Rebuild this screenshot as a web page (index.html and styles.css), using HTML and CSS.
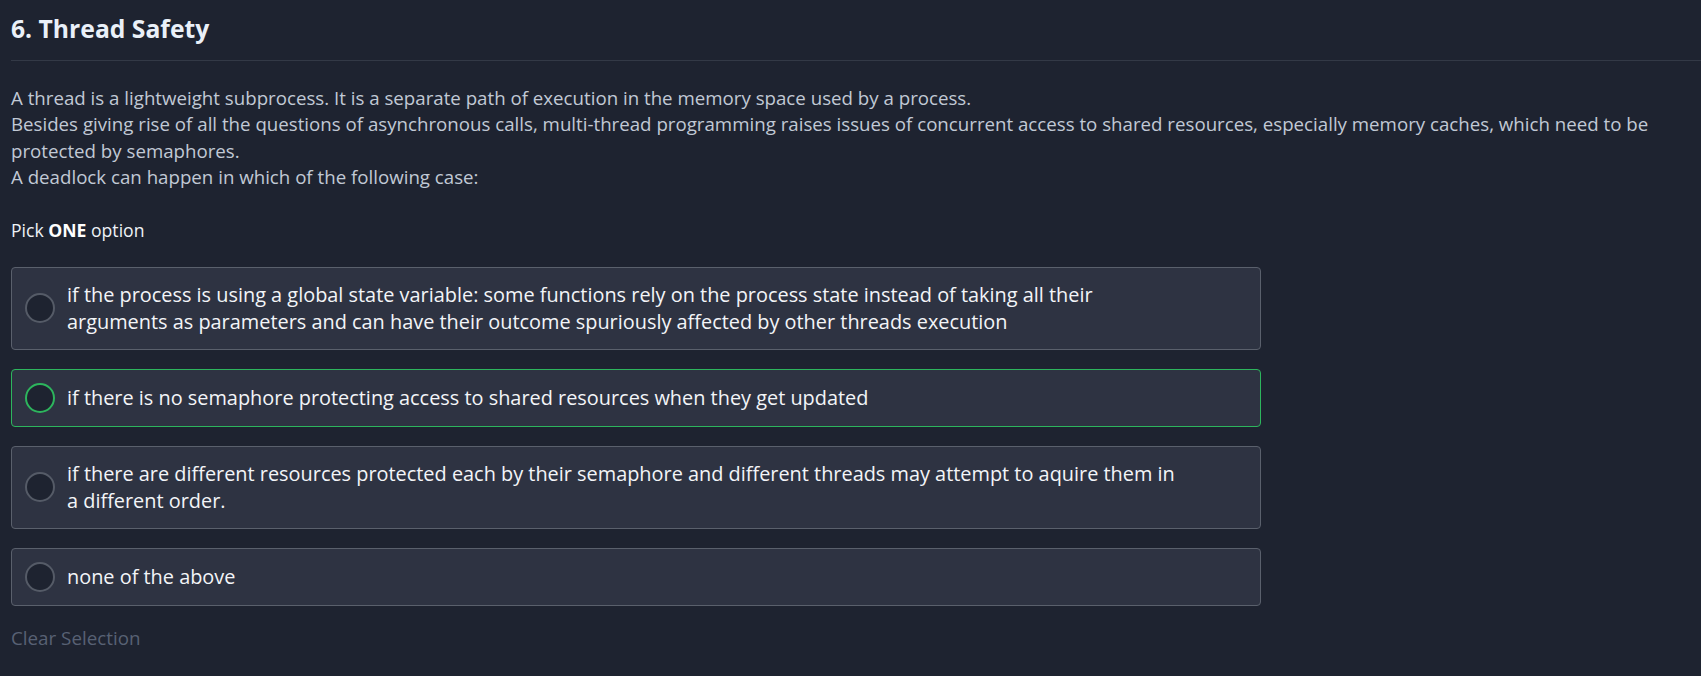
FILE: index.html
```html
<!DOCTYPE html>
<html lang="en">
<head>
<meta charset="utf-8">
<title>6. Thread Safety</title>
<link rel="stylesheet" href="styles.css">
</head>
<body>
<main class="page">
  <h1 class="title">6. Thread Safety</h1>
  <div class="prompt">
    <p>A thread is a lightweight subprocess. It is a separate path of execution in the memory space used by a process.<br>
    Besides giving rise of all the questions of asynchronous calls, multi-thread programming raises issues of concurrent access to shared resources, especially memory caches, which need to be protected by semaphores.<br>
    A deadlock can happen in which of the following case:</p>
  </div>
  <p class="pick">Pick <strong>ONE</strong> option</p>
  <ul class="options">
    <li class="option">
      <span class="radio"></span>
      <span class="opt-text">if the process is using a global state variable: some functions rely on the process state instead of taking all their arguments as parameters and can have their outcome spuriously affected by other threads execution</span>
    </li>
    <li class="option option-focus">
      <span class="radio"></span>
      <span class="opt-text">if there is no semaphore protecting access to shared resources when they get updated</span>
    </li>
    <li class="option">
      <span class="radio"></span>
      <span class="opt-text">if there are different resources protected each by their semaphore and different threads may attempt to aquire them in a different order.</span>
    </li>
    <li class="option">
      <span class="radio"></span>
      <span class="opt-text">none of the above</span>
    </li>
  </ul>
  <div class="clear">Clear Selection</div>
</main>
</body>
</html>
```
FILE: styles.css
```css
html, body {
  margin: 0;
  padding: 0;
  background: #1e2330;
}
body {
  font-family: "Open Sans", "Noto Sans", sans-serif;
  color: #c3cad6;
}
.page {
  padding: 0 0 0 11px;
}
.title {
  margin: 0;
  padding: 13px 0 15px 0;
  font-size: 24.7px;
  line-height: 32px;
  font-weight: 700;
  color: #eaf0f8;
  border-bottom: 1px solid #333946;
}
.prompt {
  margin-top: 24px;
}
.prompt p {
  margin: 0;
  font-size: 18.7px;
  line-height: 26.4px;
  color: #c1c9d5;
}
.pick {
  margin: 26px 0 0 0;
  font-size: 17.6px;
  line-height: 26px;
  color: #eef2f7;
}
.pick strong {
  font-weight: 700;
  color: #ffffff;
}
.options {
  list-style: none;
  margin: 24px 0 0 0;
  padding: 0;
  width: 1250px;
  display: flex;
  flex-direction: column;
  gap: 19px;
}
.option {
  display: flex;
  align-items: center;
  gap: 12px;
  padding: 13px;
  background: #2e3342;
  border: 1px solid #5a606c;
  border-radius: 4px;
}
.option-focus {
  border-color: #2db55d;
}
.radio {
  flex: none;
  width: 26px;
  height: 26px;
  border-radius: 50%;
  border: 2px solid #555b67;
  background: #1e2330;
}
.option-focus .radio {
  border-color: #2db55d;
}
.opt-text {
  max-width: 1115px;
  font-size: 19.9px;
  line-height: 27.5px;
  color: #f3f5f8;
}
.clear {
  margin-top: 19px;
  font-size: 18.8px;
  line-height: 26px;
  color: #586174;
}
```
